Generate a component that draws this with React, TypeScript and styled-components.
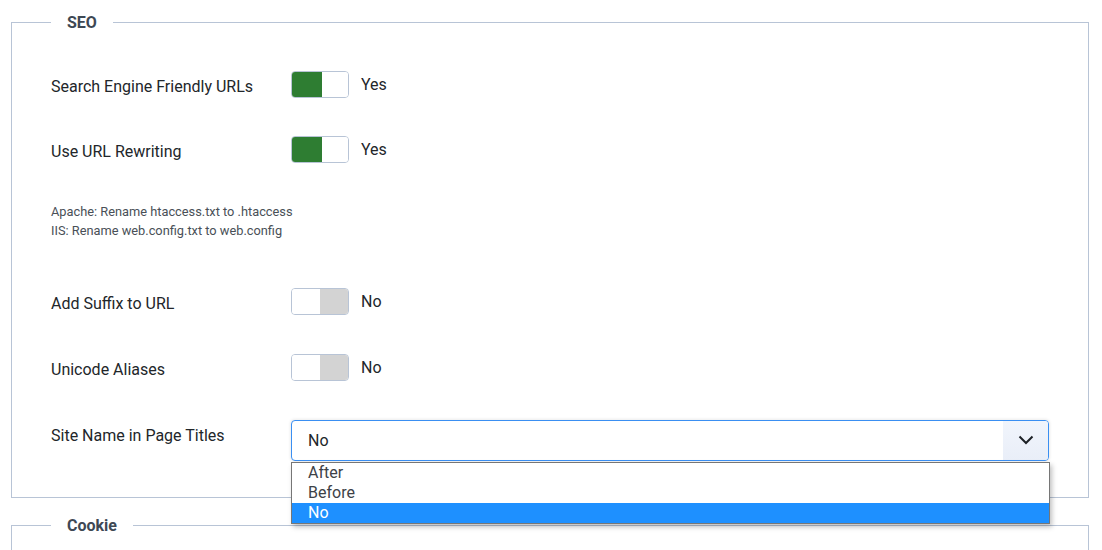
import React from "react";
import styled, { createGlobalStyle } from "styled-components";

const GlobalStyle = createGlobalStyle`
    html, body {
        margin: 0;
        padding: 0;
        background: #fff;
        overflow: hidden;
        font-family: Roboto, "Liberation Sans", Arial, sans-serif;
    }
`;

const Page = styled.div`
    padding: 12px 13px 0 11px;
`;

const Fieldset = styled.fieldset<{ $top?: number }>`
    margin: ${(p) => p.$top || 0}px 0 0 0;
    padding: 38px 39px 36px;
    border: 1px solid #b8c4d6;
    min-width: 0;
`;

const Legend = styled.legend`
    padding: 0 16px;
    font-size: 16px;
    font-weight: 700;
    line-height: 21px;
    color: #3e4854;
`;

const Row = styled.div<{ $after?: number }>`
    display: flex;
    align-items: flex-start;
    margin-bottom: ${(p) => p.$after || 0}px;
`;

const Label = styled.div`
    flex: none;
    width: 240px;
    padding-top: 4px;
    font-size: 16px;
    line-height: 24px;
    color: #22262a;
`;

const SwitchWrap = styled.div`
    display: flex;
    align-items: flex-start;
    gap: 12px;
`;

const Switch = styled.div`
    box-sizing: border-box;
    width: 58px;
    height: 27px;
    border: 1px solid #b8c4d6;
    border-radius: 4px;
    overflow: hidden;
    display: flex;
    background: #fff;
`;

const SwitchHalf = styled.span<{ $fill: string; $w: number }>`
    width: ${(p) => p.$w}px;
    height: 100%;
    background: ${(p) => p.$fill};
`;

const SwitchText = styled.span`
    margin-top: 2px;
    font-size: 16px;
    line-height: 24px;
    color: #22262a;
`;

const Note = styled.div<{ $after?: number }>`
    font-size: 12.8px;
    line-height: 18.75px;
    color: #495057;
    margin-bottom: ${(p) => p.$after || 0}px;
`;

const SelectWrap = styled.div`
    position: relative;
    flex: 1;
`;

const SelectBox = styled.div`
    box-sizing: border-box;
    height: 41px;
    display: flex;
    align-items: center;
    border: 1px solid #3a8ff2;
    border-radius: 4px;
    box-shadow: 0 0 3px 1px rgba(0, 0, 0, 0.08);
    overflow: hidden;
    background: #fff;
`;

const SelectValue = styled.span`
    flex: 1;
    padding-left: 16px;
    font-size: 16px;
    color: #22262a;
`;

const Chevron = styled.span`
    align-self: stretch;
    width: 45px;
    display: flex;
    align-items: center;
    justify-content: center;
    background: linear-gradient(#f1f5fc, #e9eef8);
`;

const OptionList = styled.ul`
    position: absolute;
    top: calc(100% + 1px);
    left: 0;
    right: -1px;
    margin: 0;
    padding: 0;
    list-style: none;
    background: #fff;
    border: 1px solid #767676;
    box-shadow: 2px 3px 5px rgba(0, 0, 0, 0.25);
    z-index: 2;
`;

const OptionItem = styled.li<{ $selected?: boolean }>`
    height: 20px;
    line-height: 20px;
    padding-left: 16px;
    font-size: 16px;
    color: ${(p) => (p.$selected ? "#fff" : "#3d4247")};
    background: ${(p) => (p.$selected ? "#1e90ff" : "#fff")};
`;

const Toggle = ({ on }: { on: boolean }) => (
    <SwitchWrap>
        <Switch>
            {on ? (
                <>
                    <SwitchHalf $fill="#2e7d32" $w={30} />
                    <SwitchHalf $fill="#fff" $w={26} />
                </>
            ) : (
                <>
                    <SwitchHalf $fill="#fff" $w={28} />
                    <SwitchHalf $fill="#d3d3d3" $w={28} />
                </>
            )}
        </Switch>
        <SwitchText>{on ? "Yes" : "No"}</SwitchText>
    </SwitchWrap>
);

const options = ["After", "Before", "No"];

export default function App() {
    return (
        <Page>
            <GlobalStyle />
            <Fieldset>
                <Legend>SEO</Legend>
                <Row $after={37}>
                    <Label>Search Engine Friendly URLs</Label>
                    <Toggle on />
                </Row>
                <Row $after={39}>
                    <Label>Use URL Rewriting</Label>
                    <Toggle on />
                </Row>
                <Note $after={47}>
                    Apache: Rename htaccess.txt to .htaccess
                    <br />
                    IIS: Rename web.config.txt to web.config
                </Note>
                <Row $after={38}>
                    <Label>Add Suffix to URL</Label>
                    <Toggle on={false} />
                </Row>
                <Row $after={38}>
                    <Label>Unicode Aliases</Label>
                    <Toggle on={false} />
                </Row>
                <Row>
                    <Label>Site Name in Page Titles</Label>
                    <SelectWrap>
                        <SelectBox>
                            <SelectValue>No</SelectValue>
                            <Chevron>
                                <svg width="16" height="10" viewBox="0 0 16 10">
                                    <path d="M1.5 1.5 L8 8 L14.5 1.5" fill="none" stroke="#1d2126" strokeWidth="2" />
                                </svg>
                            </Chevron>
                        </SelectBox>
                        <OptionList>
                            {options.map((o) => (
                                <OptionItem key={o} $selected={o === "No"}>
                                    {o}
                                </OptionItem>
                            ))}
                        </OptionList>
                    </SelectWrap>
                </Row>
            </Fieldset>
            <Fieldset $top={17}>
                <Legend>Cookie</Legend>
                <Row>
                    <Label>&nbsp;</Label>
                </Row>
            </Fieldset>
        </Page>
    );
}
